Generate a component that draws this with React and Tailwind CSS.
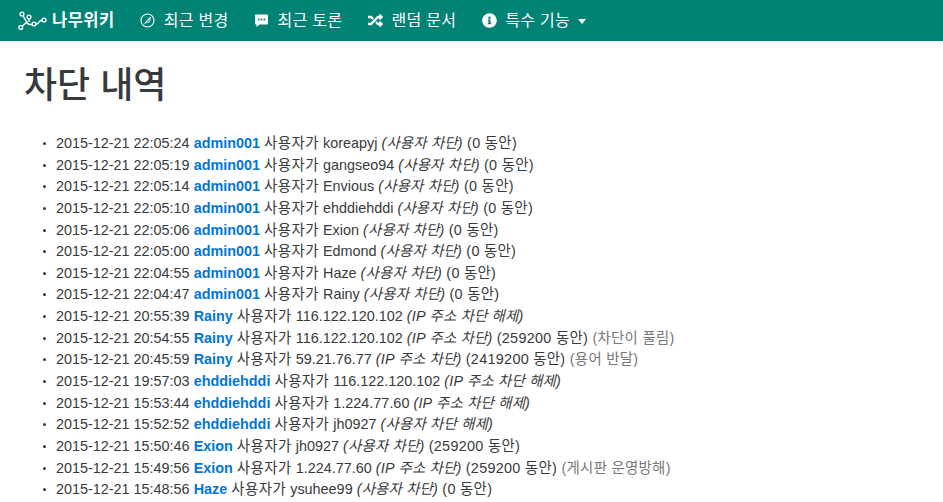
import React from "react";
import { FaRandom, FaInfoCircle } from "react-icons/fa";

const F = { fontFamily: '"Liberation Sans", "Noto Sans CJK KR", sans-serif' };

const rows = [
  ["2015-12-21 22:05:24", "admin001", "koreapyj", "사용자 차단", "0", null],
  ["2015-12-21 22:05:19", "admin001", "gangseo94", "사용자 차단", "0", null],
  ["2015-12-21 22:05:14", "admin001", "Envious", "사용자 차단", "0", null],
  ["2015-12-21 22:05:10", "admin001", "ehddiehddi", "사용자 차단", "0", null],
  ["2015-12-21 22:05:06", "admin001", "Exion", "사용자 차단", "0", null],
  ["2015-12-21 22:05:00", "admin001", "Edmond", "사용자 차단", "0", null],
  ["2015-12-21 22:04:55", "admin001", "Haze", "사용자 차단", "0", null],
  ["2015-12-21 22:04:47", "admin001", "Rainy", "사용자 차단", "0", null],
  ["2015-12-21 20:55:39", "Rainy", "116.122.120.102", "IP 주소 차단 해제", null, null],
  ["2015-12-21 20:54:55", "Rainy", "116.122.120.102", "IP 주소 차단", "259200", "차단이 풀림"],
  ["2015-12-21 20:45:59", "Rainy", "59.21.76.77", "IP 주소 차단", "2419200", "용어 반달"],
  ["2015-12-21 19:57:03", "ehddiehddi", "116.122.120.102", "IP 주소 차단 해제", null, null],
  ["2015-12-21 15:53:44", "ehddiehddi", "1.224.77.60", "IP 주소 차단 해제", null, null],
  ["2015-12-21 15:52:52", "ehddiehddi", "jh0927", "사용자 차단 해제", null, null],
  ["2015-12-21 15:50:46", "Exion", "jh0927", "사용자 차단", "259200", null],
  ["2015-12-21 15:49:56", "Exion", "1.224.77.60", "IP 주소 차단", "259200", "게시판 운영방해"],
  ["2015-12-21 15:48:56", "Haze", "ysuhee99", "사용자 차단", "0", null],
];

function Logo() {
  return (
    <div className="flex items-center">
      <svg width="30" height="20" viewBox="0 0 30 20" fill="none" stroke="white" strokeWidth="1.4">
        <circle cx="4" cy="3" r="1.9" />
        <circle cx="11" cy="6" r="1.9" />
        <circle cx="2.7" cy="16.5" r="1.9" />
        <circle cx="16" cy="13" r="1.9" />
        <circle cx="26" cy="9" r="1.9" />
        <path d="M5 4.8 L9.5 12.5 Q11 14 14 13.3 M4.2 15.2 L9.5 10.5 M11 8 V11 M17.9 13 Q20 13.5 21 11 Q22 9.3 24 9.2" />
      </svg>
      <span className="ml-[4px] text-[16.5px] font-bold tracking-[0.5px] leading-none text-white">나무위키</span>
    </div>
  );
}

function NavItem({ icon, children }) {
  return (
    <a className="flex items-center text-white text-[16px] tracking-[0.3px] whitespace-nowrap">
      <span className="w-[16px] flex justify-center mr-[8px]">{icon}</span>
      {children}
    </a>
  );
}

export default function App() {
  return (
    <div style={F} className="h-[502px] overflow-hidden bg-white text-[#373a3c]">
      <nav className="h-[41px] bg-[#008275] flex items-center pl-[18px]">
        <Logo />
        <div className="flex items-center ml-[25px] gap-[25px]">
          <NavItem icon={
            <svg width="15" height="15" viewBox="0 0 15 15" fill="none" stroke="white" strokeWidth="1.1">
              <circle cx="7.5" cy="7.5" r="6.5" />
              <path d="M4.6 10.6 L10.6 4.2" />
              <path d="M10.6 4.2 L9.4 9 L5.6 9.6 Z" fill="none" strokeWidth="0.8" />
            </svg>
          }>최근 변경</NavItem>
          <NavItem icon={
            <svg width="15" height="15" viewBox="0 0 15 15">
              <path fillRule="evenodd" fill="white" d="M2 1.5 H13 A1 1 0 0 1 14 2.5 V10.5 A1 1 0 0 1 13 11.5 H5.5 L2.5 14 V11.5 H2 A1 1 0 0 1 1 10.5 V2.5 A1 1 0 0 1 2 1.5 Z M4 5.5 V7.5 H5.5 V5.5 Z M6.8 5.5 V7.5 H8.3 V5.5 Z M9.6 5.5 V7.5 H11.1 V5.5 Z" />
            </svg>
          }>최근 토론</NavItem>
          <NavItem icon={<FaRandom className="w-[15px] h-[15px] text-white" />}>랜덤 문서</NavItem>
          <NavItem icon={<FaInfoCircle className="w-[15px] h-[15px] text-white" />}>
            특수 기능
            <span className="ml-[8px] mt-[1px] w-0 h-0 border-x-[4.5px] border-x-transparent border-t-[5px] border-t-white" />
          </NavItem>
        </div>
      </nav>
      <main className="px-[24px]">
        <h1 className="mt-[21px] text-[36px] leading-[48px] font-medium">차단 내역</h1>
        <ul className="mt-[23px] pl-[32px] list-none text-[14.4px] leading-[21.64px]">
          {rows.map((r, i) => (
            <li key={i} className="whitespace-nowrap relative">
              <span className="absolute left-[-13px] top-[9px] w-[3px] h-[3px] rounded-full bg-[#373a3c]" />
              {r[0]} <a className="font-bold text-[#0275d8]">{r[1]}</a>{" "}
              <span className="tracking-[0.5px]">사용자가</span> {r[2]}{" "}
              <i className="tracking-[0.2px]">({r[3]})</i>
              {r[4] && <span className="tracking-[0.3px]"> ({r[4]} 동안)</span>}
              {r[5] && <span className="text-[#777] tracking-[0.3px]"> ({r[5]})</span>}
            </li>
          ))}
        </ul>
      </main>
    </div>
  );
}
